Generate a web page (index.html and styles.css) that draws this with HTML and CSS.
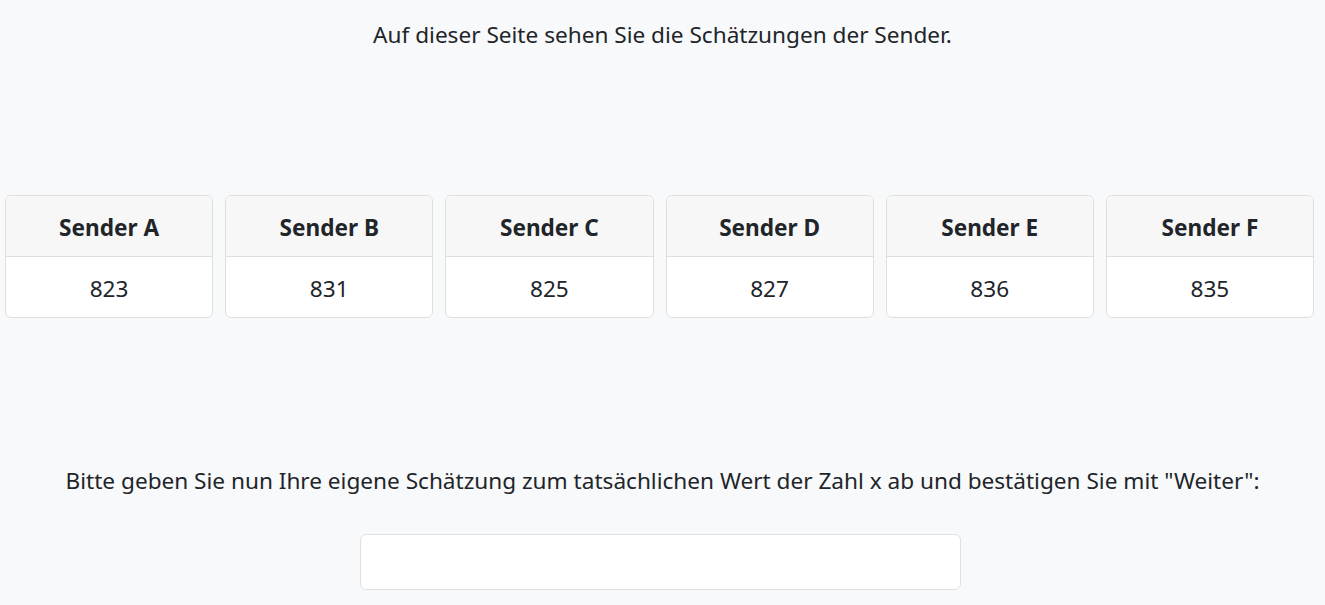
FILE: index.html
```html
<!DOCTYPE html>
<html lang="de">
<head>
<meta charset="utf-8">
<title>Schätzungen</title>
<link rel="stylesheet" href="styles.css">
</head>
<body>
<main class="page">
  <p class="intro">Auf dieser Seite sehen Sie die Schätzungen der Sender.</p>
  <div class="cards">
    <div class="card"><div class="card-head">Sender A</div><div class="card-body">823</div></div>
    <div class="card"><div class="card-head">Sender B</div><div class="card-body">831</div></div>
    <div class="card"><div class="card-head">Sender C</div><div class="card-body">825</div></div>
    <div class="card"><div class="card-head">Sender D</div><div class="card-body">827</div></div>
    <div class="card"><div class="card-head">Sender E</div><div class="card-body">836</div></div>
    <div class="card"><div class="card-head">Sender F</div><div class="card-body">835</div></div>
  </div>
  <p class="prompt">Bitte geben Sie nun Ihre eigene Schätzung zum tatsächlichen Wert der Zahl x ab und bestätigen Sie mit "Weiter":</p>
  <div class="field"><input class="estimate" type="text" aria-label="Schätzung"></div>
</main>
</body>
</html>
```
FILE: styles.css
```css
html, body {
  margin: 0;
  padding: 0;
  background: #f8f9fa;
}
body {
  font-family: "Noto Sans", "Open Sans", sans-serif;
  font-size: 22.6px;
  color: #212529;
}
.page {
  display: flex;
  flex-direction: column;
  align-items: stretch;
}
.intro {
  margin: 20px 0 0;
  line-height: 30px;
  text-align: center;
}
.cards {
  display: grid;
  grid-template-columns: repeat(6, 1fr);
  gap: 12px;
  margin: 145px 0 0 5px;
  width: 1309px;
}
.card {
  background: #fff;
  border: 1px solid #dfdfdf;
  border-radius: 6px;
  overflow: hidden;
  text-align: center;
}
.card-head {
  background: #f7f7f7;
  border-bottom: 1px solid #dfdfdf;
  font-weight: 700;
  height: 60px;
  line-height: 64px;
}
.card-body {
  height: 60px;
  line-height: 64px;
}
.prompt {
  margin: 148px 0 0;
  line-height: 30px;
  text-align: center;
}
.field {
  display: flex;
  justify-content: center;
  margin-top: 38px;
  padding-right: 5px;
}
.estimate {
  width: 601px;
  height: 56px;
  box-sizing: border-box;
  border: 1px solid #dee2e6;
  border-radius: 6px;
  background: #fff;
  font: inherit;
  padding: 6px 12px;
}
```
